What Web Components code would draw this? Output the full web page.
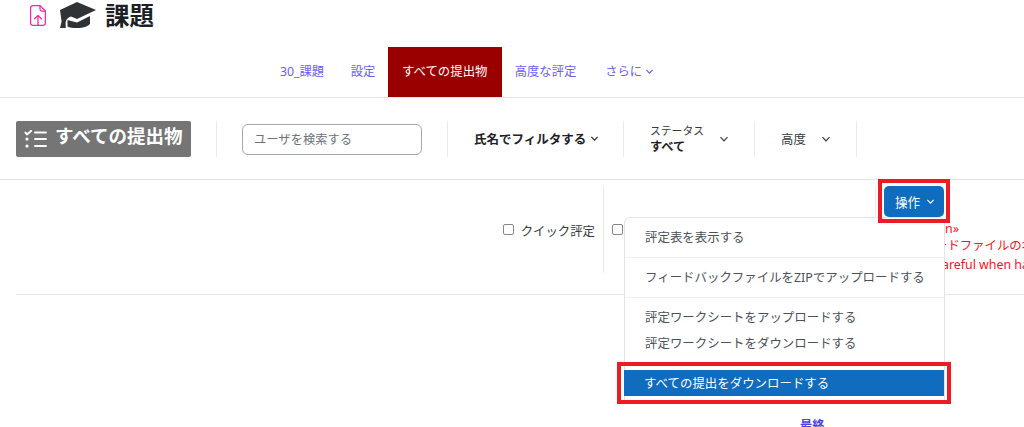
<!DOCTYPE html>
<html lang="ja">
<head>
<meta charset="utf-8">
<title>課題</title>
<style>
html, body { margin: 0; height: 427px; overflow: hidden; background: #fff; }
body { font-family: "Noto Sans", "Noto Sans CJK JP", sans-serif; color: #343a40; font-size: 12.4px; }
</style>
</head>
<body>
<page-heading>課題</page-heading>
<tab-bar>
	<tab-item>30_課題</tab-item>
	<tab-item>設定</tab-item>
	<tab-item active>すべての提出物</tab-item>
	<tab-item>高度な評定</tab-item>
	<tab-item more>さらに</tab-item>
</tab-bar>
<grading-toolbar></grading-toolbar>
<action-row></action-row>
<last-link>最終</last-link>

<script>
const chevron = (size) => `<svg width="${size}" height="${size}" viewBox="0 0 10 10" fill="none" stroke="currentColor" stroke-width="1.2" aria-hidden="true"><path d="M1.5 3.2 5 6.8l3.5-3.6"/></svg>`

class PageHeading extends HTMLElement {
	constructor() {
		super();
		this.attachShadow({mode: 'open'}).innerHTML = `
<style>
:host { display: flex; height: 47px; box-sizing: border-box; padding: 2px 0 0 30px; align-items: flex-start; }
svg { display: block; }
.file { margin: 3px 13px 0 0; }
h1 { margin: 0 0 0 9px; font-size: 24.5px; line-height: 28px; font-weight: 700; color: #1d2125; }
</style>
<svg class="file" width="16" height="21" viewBox="0 0 16 21" fill="none" stroke="#f7289f" stroke-width="1.25" stroke-linecap="round" stroke-linejoin="round">
	<path d="M10 .6H3A2.4 2.4 0 0 0 .6 3v15A2.4 2.4 0 0 0 3 20.4h10a2.4 2.4 0 0 0 2.4-2.4V6z"/>
	<path d="M10 .6v3.6A1.8 1.8 0 0 0 11.8 6h3.6"/>
	<path d="M8 20v-9.5M4.6 13.8 8 10.4l3.4 3.4"/>
</svg>
<svg width="37" height="26" viewBox="0 0 37 26" fill="#2f3336">
	<path d="M18 0 37 8 18 17 12 14.5C8.5 15.5 6.8 18 6.6 21L6.8 26H1L2.6 19.5 1 8Z"/>
	<path d="M8.5 18 18 20.6 31 14V22C27 27 13 27 8.5 24.5Z"/>
</svg>
<h1><slot></slot></h1>`;
	}
}

class TabBar extends HTMLElement {
	constructor() {
		super();
		this.attachShadow({mode: 'open'}).innerHTML = `
<style>
:host { display: flex; height: 51px; box-sizing: border-box; padding-left: 266px; border-bottom: 1px solid #e3e4e6; }
</style>
<slot></slot>`;
	}
}

class TabItem extends HTMLElement {
	constructor() {
		super();
		this.attachShadow({mode: 'open'}).innerHTML = `
<style>
:host { display: flex; align-items: center; gap: 3px; padding: 0 14px 2px; color: #6a5cf5; font-size: 12.3px; }
:host(:first-child) { padding-right: 12.5px; }
:host([active]) { background: #990000; color: #fff; width: 114px; padding: 0 0 2px; justify-content: center; font-size: 12.4px; margin-left: -1.5px; margin-right: -1px; height: 50px; box-sizing: border-box; }
:host([more]) { margin-left: 1px; }
svg { display: none; }
:host([more]) svg { display: block; }
</style>
<slot></slot>${chevron(9)}`;
	}
}

class GradingToolbar extends HTMLElement {
	constructor() {
		super();
		this.attachShadow({mode: 'open'}).innerHTML = `
<style>
:host { display: flex; height: 82px; box-sizing: border-box; padding-left: 16px; align-items: center; border-bottom: 1px solid #e3e4e6; }
.cell { height: 36px; box-sizing: border-box; display: flex; align-items: center; border-right: 1px solid #e9ebed; }
.badge { width: 201px; }
.badge div { display: flex; width: 175px; height: 36px; box-sizing: border-box; align-items: center; padding-left: 8px; gap: 8px; background: #757575; border-radius: 2px; color: #fff; font-size: 18.5px; font-weight: 700; }
.badge span { padding-bottom: 8px; }
.search { width: 231px; padding-left: 25px; }
input { width: 180px; height: 31px; margin-top: 2px; box-sizing: border-box; border: 1px solid #a3a8ad; border-radius: 6px; padding: 0 11px; font: inherit; font-size: 12.3px; }
input::placeholder { color: #6a737b; opacity: 1; }
.name { width: 176px; padding-left: 26px; font-size: 12.5px; font-weight: 700; gap: 4px; color: #1d2125; }
.status { width: 131px; padding-left: 26px; }
.status p { margin: 0; width: 69px; font-size: 10.8px; line-height: 15px; }
.status b { display: block; font-size: 12.2px; line-height: 17px; color: #1d2125; }
.grade { width: 102px; padding-left: 26px; }
.grade span { width: 40px; }
</style>
<div class="cell badge"><div>
	<svg width="23" height="18" viewBox="0 0 23 18" fill="none" stroke="#fff" stroke-width="2" stroke-linecap="round" stroke-linejoin="round">
		<path d="M1.5 2.6 3 4.4 7 .9M11 2.5H22M11 9H22M11 16H22"/>
		<path d="M3 9v.1M3 16v.1" stroke-width="3.2"/>
	</svg>
	<span>すべての提出物</span></div></div>
<div class="cell search"><input placeholder="ユーザを検索する"></div>
<div class="cell name">氏名でフィルタする${chevron(9)}</div>
<div class="cell status"><p>ステータス<b>すべて</b></p>${chevron(10)}</div>
<div class="cell grade"><span>高度</span>${chevron(10)}</div>`;
	}
}

class RedCallout extends HTMLElement {
	constructor() {
		super();
		this.attachShadow({mode: 'open'}).innerHTML = `
<style>
:host { display: block; position: absolute; border: 4px solid #ed1c24; pointer-events: none; z-index: 3; }
</style>`;
	}
}

class ActionMenu extends HTMLElement {
	constructor() {
		super();
		this.attachShadow({mode: 'open'}).innerHTML = `
<style>
:host { display: block; position: absolute; left: 608px; top: 37px; width: 321px; height: 186px; box-sizing: border-box; z-index: 2; background: #fff; border: 1px solid #e2e3e5; border-bottom-color: #eceded; border-radius: 6px 6px 0 0; color: #4a5157; font-size: 12.45px; }
.group { display: flex; flex-direction: column; justify-content: center; border-bottom: 1px solid #eeeff0; }
.item { padding-left: 20px; height: 26px; line-height: 26px; white-space: nowrap; }
.one { height: 39px; }
.two { height: 39px; }
.three { height: 65px; box-sizing: border-box; padding-top: 2px; }
.picked { position: relative; background: #0f6cbf; color: #fff; margin: 7px 0 0 -1px; line-height: 27px; }
red-callout { inset: -8px -7px -8px -7px; }
</style>
<div class="group one"><div class="item">評定表を表示する</div></div>
<div class="group two"><div class="item">フィードバックファイルをZIPでアップロードする</div></div>
<div class="group three"><div class="item">評定ワークシートをアップロードする</div><div class="item">評定ワークシートをダウンロードする</div></div>
<div class="item picked">すべての提出をダウンロードする<red-callout></red-callout></div>`;
	}
}

class ActionRow extends HTMLElement {
	constructor() {
		super();
		this.attachShadow({mode: 'open'}).innerHTML = `
<style>
:host { display: flex; position: relative; height: 115px; box-sizing: border-box; margin-left: 16px; padding-top: 6px; justify-content: flex-end; border-bottom: 1px solid #e3e4e6; }
.check { display: flex; height: 87px; padding-top: 36px; box-sizing: border-box; gap: 7px; color: #343a40; white-space: nowrap; }
.box { flex: none; width: 9px; height: 9px; margin-top: 2px; border: 1px solid #83878b; border-radius: 2px; }
.quick { padding-right: 8px; border-right: 1px solid #e9ebed; }
.other { width: 271px; padding-left: 8px; }
.actions { position: relative; width: 148px; flex: none; border-left: 1px solid #e9ebed; height: 31px; }
button { position: relative; display: flex; align-items: center; gap: 6px; margin-left: 8px; width: 60px; height: 31px; box-sizing: border-box; padding: 0 0 0 11px; border: 0; border-radius: 5px; background: #0f6cbf; color: #fff; font: inherit; font-size: 12.6px; }
button red-callout { inset: -7px -6px -6px -6px; }
.notice { position: absolute; top: 34px; left: 59px; color: #f5141e; font-size: 12.4px; line-height: 17px; white-space: nowrap; }
.notice div:first-child { padding-left: 10px; }
.notice div:last-child { padding-left: 1px; line-height: 21px; }
</style>
<label class="check quick"><span class="box"></span>クイック評定</label>
<label class="check other"><span class="box"></span></label>
<div class="actions">
	<button>操作${chevron(9)}<red-callout></red-callout></button>
	<div class="notice"><div>n»</div><div>ードファイルの名前</div><div>careful when handling</div></div>
</div>
<action-menu></action-menu>`;
	}
}

class LastLink extends HTMLElement {
	constructor() {
		super();
		this.attachShadow({mode: 'open'}).innerHTML = `
<style>
:host { display: block; padding: 122px 0 0 800px; color: #4a3fe8; font-weight: 700; font-size: 12.2px; line-height: 18px; }
</style>
<slot></slot>`;
	}
}

customElements.define('page-heading', PageHeading);
customElements.define('tab-bar', TabBar);
customElements.define('tab-item', TabItem);
customElements.define('grading-toolbar', GradingToolbar);
customElements.define('red-callout', RedCallout);
customElements.define('action-menu', ActionMenu);
customElements.define('action-row', ActionRow);
customElements.define('last-link', LastLink);
</script>
</body>
</html>
